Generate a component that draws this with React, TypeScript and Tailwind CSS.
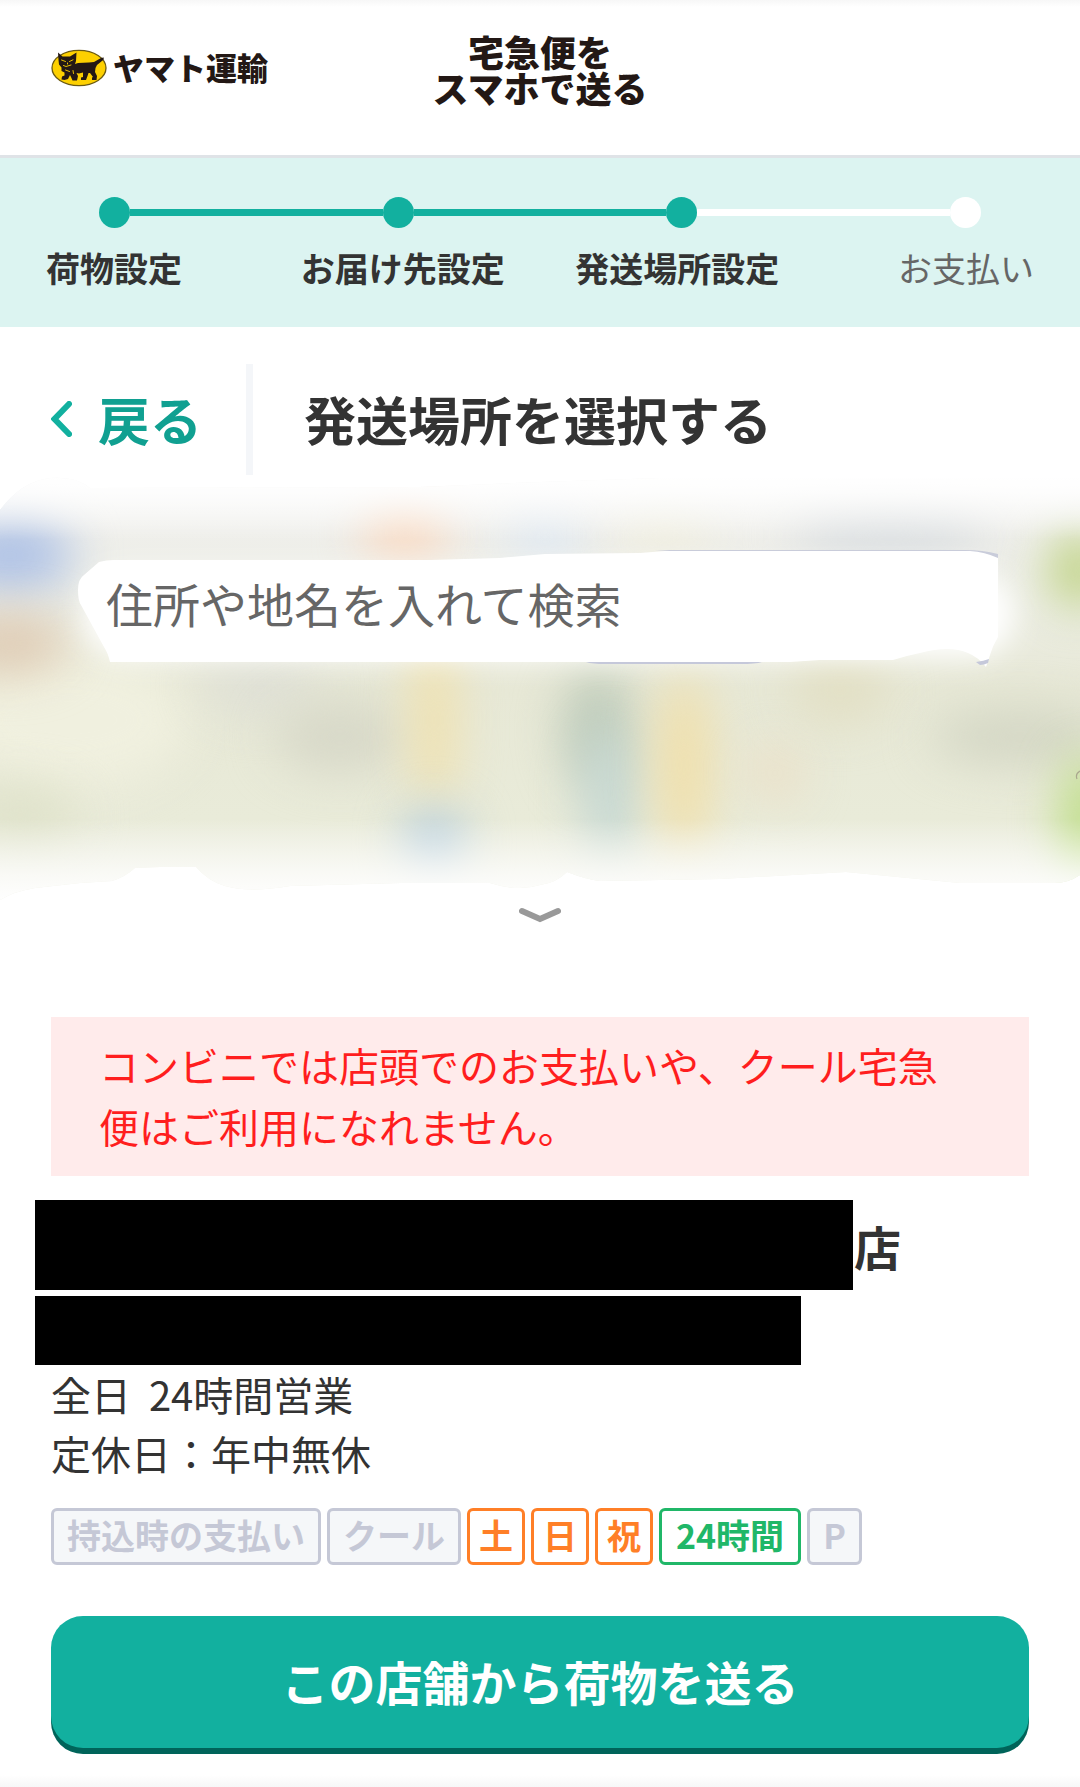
import clsx from "clsx";

type Step = { label: string; done: boolean };

const steps: Step[] = [
  { label: "荷物設定", done: true },
  { label: "お届け先設定", done: true },
  { label: "発送場所設定", done: true },
  { label: "お支払い", done: false },
];

type Tag = { label: string; kind: "off" | "day" | "open" };

const tags: Tag[] = [
  { label: "持込時の支払い", kind: "off" },
  { label: "クール", kind: "off" },
  { label: "土", kind: "day" },
  { label: "日", kind: "day" },
  { label: "祝", kind: "day" },
  { label: "24時間", kind: "open" },
  { label: "P", kind: "off" },
];

// cx, cy, rx, ry, colour
const mapBlobs: [number, number, number, number, string][] = [
  [70, 245, 120, 70, "#f0f0df"],
  [10, 80, 64, 38, "#b0c3e6"],
  [10, 168, 58, 30, "#dfcbb4"],
  [20, 340, 60, 30, "#dfe2ca"],
  [405, 58, 44, 32, "#f9dcc6"],
  [260, 210, 60, 30, "#dfe0d6"],
  [340, 262, 66, 36, "#d7d8c8"],
  [434, 245, 22, 90, "#f0e1ae"],
  [434, 366, 32, 34, "#b8cfde"],
  [545, 62, 40, 28, "#e0e9f2"],
  [598, 255, 36, 60, "#becbba"],
  [610, 320, 28, 70, "#c6d8d3"],
  [684, 290, 28, 90, "#f0dfaa"],
  [775, 298, 26, 28, "#ebdfc6"],
  [840, 215, 50, 34, "#e2dfc4"],
  [665, 60, 50, 20, "#f1efdf"],
  [890, 60, 100, 26, "#dbdfe2"],
  [1020, 262, 90, 28, "#d3d6c4"],
  [1080, 95, 34, 38, "#c2d48a"],
  [1088, 345, 28, 64, "#bedd88"],
];

function CatLogo() {
  return (
    <svg viewBox="0 0 56 38" className="h-[38px] w-14 shrink-0" aria-hidden="true">
      <ellipse cx="28" cy="19" rx="27" ry="17.6" fill="#fdd000" stroke="#6b5a12" strokeWidth="1.3" />
      <path
        fill="#231815"
        d="M7 3.500 L11.500 7.500 L19 7.500 L25.500 3.500 L25 12 L24 15 L27 14 L38 13.500 L43 13 L50 9 L52.800 8.500 L52.500 10.800 L46 16 L44.500 19 L44 23 L46 27 L45.500 31 L41 31 L41 28.500 L42 28 L39 24 L37.500 24 L36.500 27 L35 31 L30 31 L30 28.500 L32 28 L32 23.500 L28 24.500 L25.500 24 L27 27 L26 31.500 L21.500 31.500 L20 28 L19 26 L17 30 L13.500 31 L10.500 30.500 L11 27.500 L13.500 26.500 L13.500 23.500 L10.500 22 L10.500 18.500 L8 15.500 L7.500 11 Z"
      />
      <path
        fill="none"
        stroke="#fdd000"
        strokeWidth="0.9"
        strokeLinecap="round"
        d="M10.500 11 L14.500 12.500 M18.500 12.500 L22 10.800 M12.500 16.500 L15 17.500 L20 16 M14.500 21 L18.500 22.500 M16.500 14 L16.500 15 M22 21.500 L22.500 24.500"
      />
    </svg>
  );
}

function Stepper() {
  return (
    <nav aria-label="手続きの流れ" className="bg-[#dcf4f1] py-[39px]">
      <div className="flex items-center px-[99px]">
        {steps.map((s, i) => (
          <div key={s.label} className={clsx("flex items-center", i > 0 && "flex-1")}>
            {i > 0 ? (
              <div className={clsx("h-[7px] flex-1", s.done ? "bg-[#12b09f]" : "bg-white")} />
            ) : null}
            <div
              className={clsx("size-[31px] rounded-full", s.done ? "bg-[#12b09f]" : "bg-white")}
            />
          </div>
        ))}
      </div>
      <ol className="mt-5 flex justify-between px-[46px]">
        {steps.map((s, i) => (
          <li
            key={s.label}
            className={clsx(
              "text-[34px] leading-10 whitespace-nowrap",
              s.done ? "font-bold" : "text-[#666]",
              i === 1 && "ml-12",
              i === 2 && "mr-12",
            )}
          >
            {s.label}
          </li>
        ))}
      </ol>
    </nav>
  );
}

function BlurredMap() {
  return (
    <svg
      viewBox="0 0 1080 430"
      preserveAspectRatio="none"
      className="block h-[430px] w-full"
      aria-hidden="true"
    >
      <defs>
        <clipPath id="map-edge">
          <path d="M0 35 Q22 6 50 3 Q76 1 90 13 L420 12 L540 7 L660 3 L1080 3 V400 Q1068 408 1055 408 L960 408 L846 397 L720 404 L600 406 Q588 405 567 397 Q556 408 540 410 Q518 417 490 408 L400 408 L290 411 Q250 418 225 411 Q208 406 196 392 L160 392 L135 393 Q125 402 112 406 L80 408 L35 413 Q15 416 0 425 Z" />
        </clipPath>
        <linearGradient id="map-base" x1="0" x2="0" y1="0" y2="1">
          <stop offset="0" stopColor="#f8f8f7" />
          <stop offset="0.13" stopColor="#efefeb" />
          <stop offset="0.3" stopColor="#ecede4" />
          <stop offset="0.5" stopColor="#e7e8d6" />
          <stop offset="0.8" stopColor="#e9ebd9" />
          <stop offset="1" stopColor="#f0f0e6" />
        </linearGradient>
        <linearGradient id="map-fade" x1="0" x2="0" y1="0" y2="1">
          <stop offset="0" stopColor="#fff" />
          <stop offset="0.04" stopColor="#fff" stopOpacity="0.8" />
          <stop offset="0.15" stopColor="#fff" stopOpacity="0" />
          <stop offset="0.8" stopColor="#fff" stopOpacity="0" />
          <stop offset="0.93" stopColor="#fff" stopOpacity="0.7" />
          <stop offset="1" stopColor="#fff" />
        </linearGradient>
        <filter
          id="blob-blur"
          x="-200%"
          y="-200%"
          width="500%"
          height="500%"
          colorInterpolationFilters="sRGB"
        >
          <feGaussianBlur stdDeviation="23" />
        </filter>
        <filter id="glow-blur" x="-20%" y="-100%" width="140%" height="300%">
          <feGaussianBlur stdDeviation="14" />
        </filter>
      </defs>
      <g clipPath="url(#map-edge)">
        <rect width="1080" height="430" fill="url(#map-base)" />
        {mapBlobs.map(([cx, cy, rx, ry, fill]) => (
          <ellipse
            key={`${cx}-${cy}`}
            cx={cx}
            cy={cy}
            rx={rx}
            ry={ry}
            fill={fill}
            filter="url(#blob-blur)"
          />
        ))}
        <rect x="84" y="98" width="930" height="84" rx="40" fill="#fff" filter="url(#glow-blur)" />
        <rect width="1080" height="430" fill="url(#map-fade)" />
      </g>
      <path
        fill="#fff"
        d="M99 87 Q106 85 114 85 L430 85 L500 83 L545 79 L640 78 L665 76 L980 76 L998 80 V162 Q993 170 990 180 L986 192 Q978 182 968 178 Q950 170 920 178 Q905 181 893 185 L820 185 L790 187 H110 Q108 178 104 172 L81 130 Q78 126 78 115 Q78 104 84 100 Z"
      />
      <path fill="#c9ccda" d="M655 76 L670 75 H965 Q983 75 998 79 V83 Q985 77 970 76 H660 Z" />
      <path fill="#c5c8da" d="M586 187 H762 Q756 189 740 189 H605 Q592 189 586 187 Z" />
      <path fill="#c5c8da" d="M976 187 Q984 186 989 184 L988 188 Q984 190 980 190 Z" />
      <path fill="none" stroke="#a9a78e" strokeWidth="1.2" d="M1080 296 Q1075 299 1077 304" />
    </svg>
  );
}

export default function App() {
  return (
    <div
      lang="ja"
      className="flex min-h-screen flex-col bg-white font-['Noto_Sans_CJK_JP',sans-serif] text-[#333]"
    >
      <header className="grid h-[158px] grid-cols-[1fr_auto_1fr] border-b-[3px] border-[#dfe3e7] bg-linear-to-b from-[#f7f7f7] to-white to-[7px] px-[51px]">
        <a href="#" className="mt-[49px] flex h-[38px] items-center gap-1.5">
          <CatLogo />
          <span className="pb-0.5 text-[31px] leading-9 font-black whitespace-nowrap text-[#231815]">
            ヤマト運輸
          </span>
        </a>
        <p className="mt-[33px] flex flex-col items-center text-[36px] leading-9 font-black text-[#231815]">
          <span>宅急便を</span>
          <span>スマホで送る</span>
        </p>
      </header>

      <Stepper />

      <div className="mt-[37px] flex h-[111px] items-stretch">
        <a
          href="#"
          className="flex w-[253px] shrink-0 items-center gap-[26px] border-r-[7px] border-[#f4f6f9] pb-0.5 pl-[51px] text-[52px] leading-none font-bold whitespace-nowrap text-[#10a091]"
        >
          <svg viewBox="0 0 21 36" className="h-9 w-[21px]" fill="none" aria-hidden="true">
            <path
              d="M18 3 L3.500 18 L18 33"
              stroke="#12b09f"
              strokeWidth="6"
              strokeLinecap="round"
            />
          </svg>
          戻る
        </a>
        <h1 className="flex items-center pb-0.5 pl-[51px] text-[52px] leading-none font-bold">
          発送場所を選択する
        </h1>
      </div>

      <div className="relative">
        <BlurredMap />
        <input
          type="search"
          aria-label="住所や地名を入れて検索"
          placeholder="住所や地名を入れて検索"
          className="absolute inset-x-[82px] top-[85px] h-[84px] bg-transparent px-6 text-[47px] outline-none placeholder:text-[#666]"
        />
      </div>

      <button type="button" aria-label="地図を広げる" className="mx-auto block h-5">
        <svg viewBox="0 0 42 20" className="h-5 w-[42px]" fill="none" aria-hidden="true">
          <path d="M3 6 L21 14 L39 6" stroke="#999" strokeWidth="6" strokeLinecap="round" />
        </svg>
      </button>

      <main className="px-[51px] pt-[92px]">
        <p
          role="alert"
          className="bg-[#ffebeb] pt-[18px] pr-[52px] pb-[19px] pl-12 text-[40px] leading-[61px] text-[#ff1e1e]"
        >
          コンビニでは店頭でのお支払いや、クール宅急便はご利用になれません。
        </p>

        <h2 className="mt-6 -ml-4 flex items-center text-[47px] leading-none font-bold">
          <span className="mr-px h-[90px] w-[818px] bg-black" />
          店
        </h2>
        <div className="mt-1.5 -ml-4 h-[69px] w-[766px] bg-black" />
        <div className="text-[40px] leading-[59px]">
          <p className="whitespace-pre">全日  24時間営業</p>
          <p>定休日：年中無休</p>
        </div>

        <ul className="mt-[25px] flex flex-wrap gap-1.5">
          {tags.map((t) => (
            <li
              key={t.label}
              className={clsx(
                "rounded-md border-[3px] pb-[3px] text-[34px] leading-[48px] font-bold",
                t.kind === "off" && "border-[#c5c8d6] bg-[#f5f7f9] px-[13px] text-[#c5c8d6]",
                t.kind === "day" && "border-[#ff7f27] px-[9px] text-[#ff7f27]",
                t.kind === "open" && "border-[#20b768] px-3.5 text-[#20b768]",
              )}
            >
              {t.label}
            </li>
          ))}
        </ul>

        <button
          type="button"
          className="mt-[51px] block h-[132px] w-full rounded-[32px] bg-[#12b09f] pb-0.5 text-[47px] font-bold text-white shadow-[0_6px_0_#00645a]"
        >
          この店舗から荷物を送る
        </button>
      </main>

      <div className="mt-auto h-3 bg-linear-to-b from-white to-[#f7f7f7]" />
    </div>
  );
}
